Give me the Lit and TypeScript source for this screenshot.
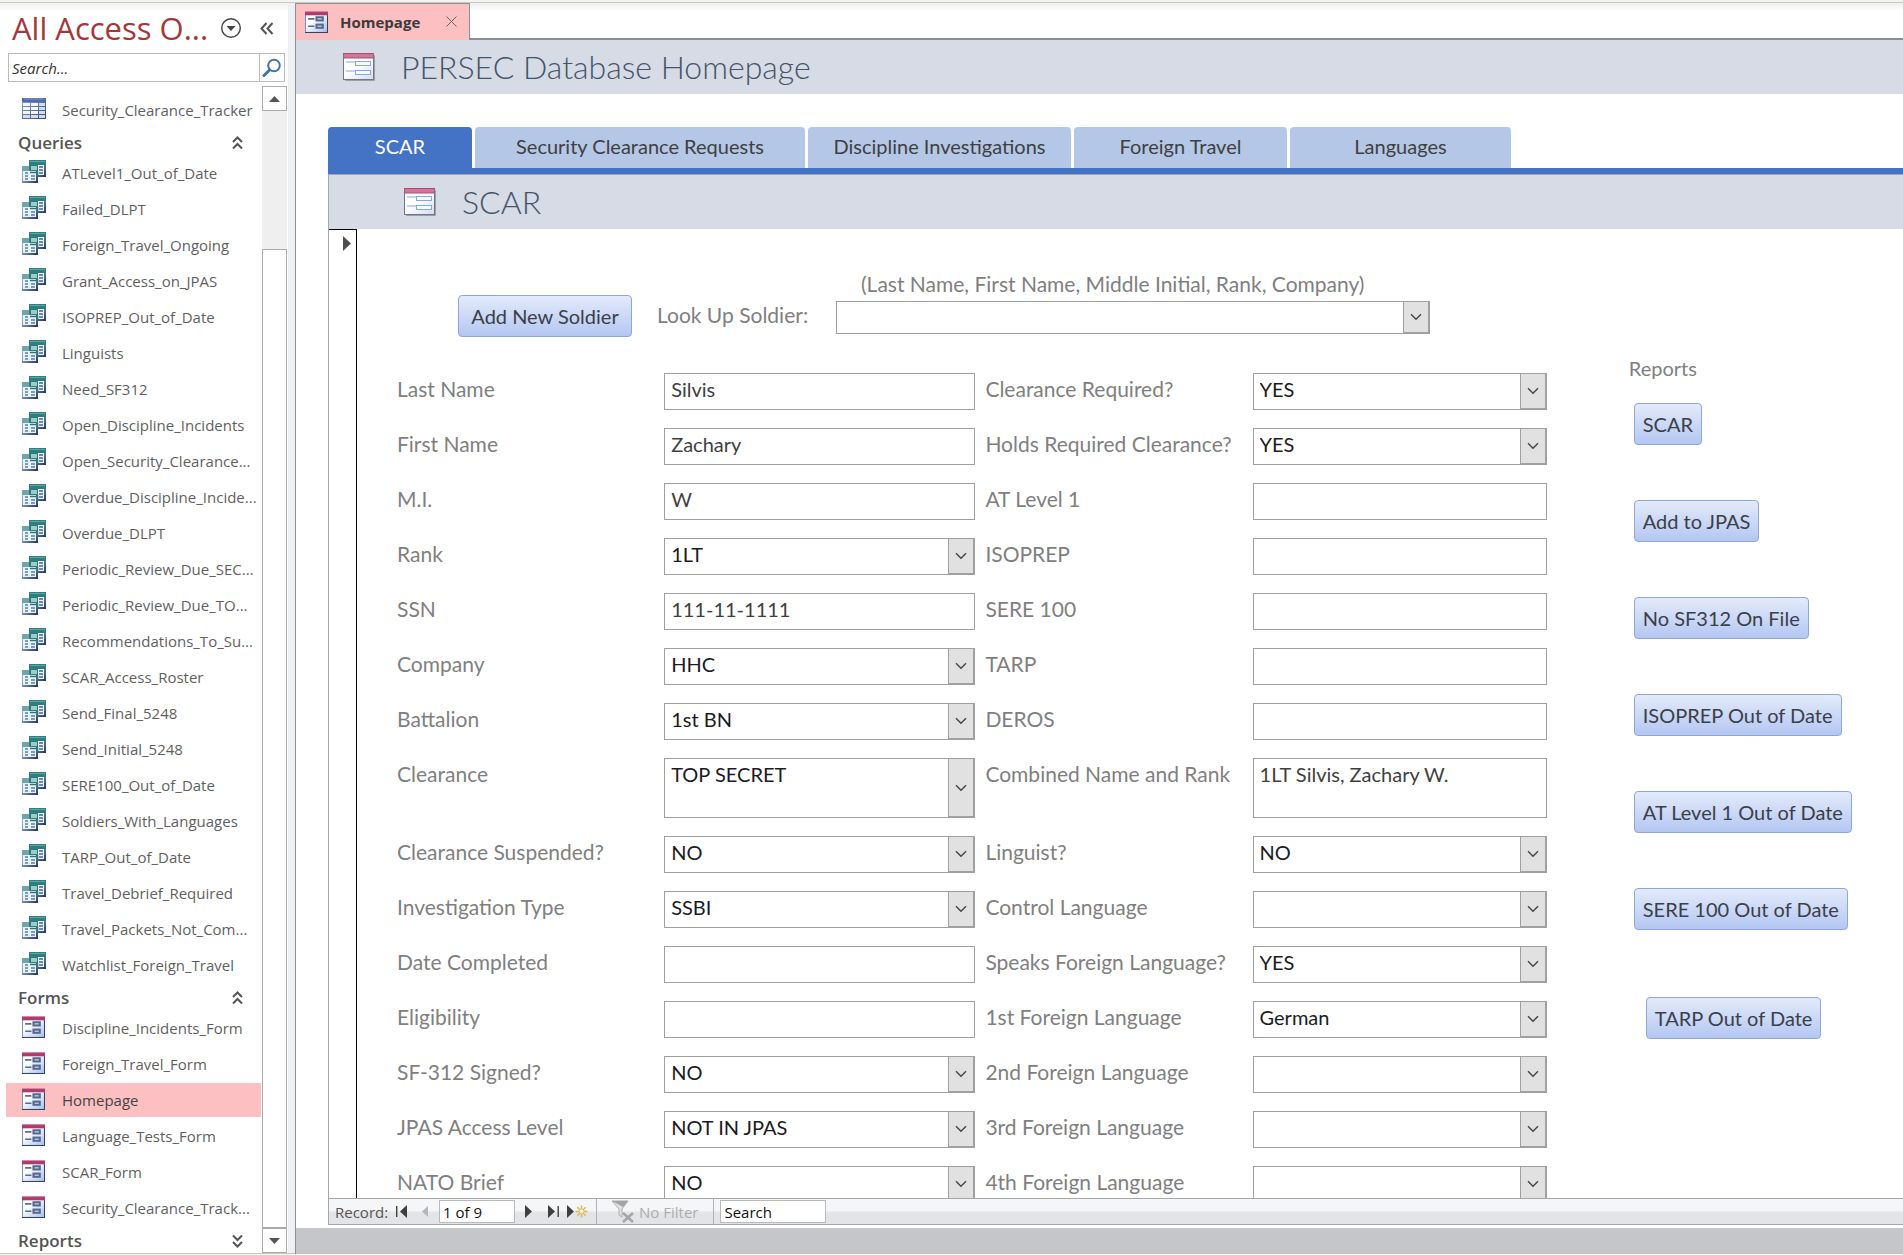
import { LitElement, html, css, svg, nothing } from "lit";
import { customElement, property } from "lit/decorators.js";
import { classMap } from "lit/directives/class-map.js";

interface Field {
  label: string;
  value?: string;
  combo?: boolean;
  tall?: boolean;
}

const QUERIES = [
  "ATLevel1_Out_of_Date",
  "Failed_DLPT",
  "Foreign_Travel_Ongoing",
  "Grant_Access_on_JPAS",
  "ISOPREP_Out_of_Date",
  "Linguists",
  "Need_SF312",
  "Open_Discipline_Incidents",
  "Open_Security_Clearance...",
  "Overdue_Discipline_Incide...",
  "Overdue_DLPT",
  "Periodic_Review_Due_SEC...",
  "Periodic_Review_Due_TO...",
  "Recommendations_To_Su...",
  "SCAR_Access_Roster",
  "Send_Final_5248",
  "Send_Initial_5248",
  "SERE100_Out_of_Date",
  "Soldiers_With_Languages",
  "TARP_Out_of_Date",
  "Travel_Debrief_Required",
  "Travel_Packets_Not_Com...",
  "Watchlist_Foreign_Travel",
];

const FORMS = [
  "Discipline_Incidents_Form",
  "Foreign_Travel_Form",
  "Homepage",
  "Language_Tests_Form",
  "SCAR_Form",
  "Security_Clearance_Track...",
];

const TABS = [
  { label: "SCAR", size: "scar" },
  { label: "Security Clearance Requests", size: "requests" },
  { label: "Discipline Investigations", size: "discipline" },
  { label: "Foreign Travel", size: "travel" },
  { label: "Languages", size: "languages" },
];

const ROWS: [Field, Field][] = [
  [{ label: "Last Name", value: "Silvis" }, { label: "Clearance Required?", value: "YES", combo: true }],
  [{ label: "First Name", value: "Zachary" }, { label: "Holds Required Clearance?", value: "YES", combo: true }],
  [{ label: "M.I.", value: "W" }, { label: "AT Level 1" }],
  [{ label: "Rank", value: "1LT", combo: true }, { label: "ISOPREP" }],
  [{ label: "SSN", value: "111-11-1111" }, { label: "SERE 100" }],
  [{ label: "Company", value: "HHC", combo: true }, { label: "TARP" }],
  [{ label: "Battalion", value: "1st BN", combo: true }, { label: "DEROS" }],
  [
    { label: "Clearance", value: "TOP SECRET", combo: true, tall: true },
    { label: "Combined Name and Rank", value: "1LT Silvis, Zachary W.", tall: true },
  ],
  [{ label: "Clearance Suspended?", value: "NO", combo: true }, { label: "Linguist?", value: "NO", combo: true }],
  [{ label: "Investigation Type", value: "SSBI", combo: true }, { label: "Control Language", combo: true }],
  [{ label: "Date Completed" }, { label: "Speaks Foreign Language?", value: "YES", combo: true }],
  [{ label: "Eligibility" }, { label: "1st Foreign Language", value: "German", combo: true }],
  [{ label: "SF-312 Signed?", value: "NO", combo: true }, { label: "2nd Foreign Language", combo: true }],
  [{ label: "JPAS Access Level", value: "NOT IN JPAS", combo: true }, { label: "3rd Foreign Language", combo: true }],
  [{ label: "NATO Brief", value: "NO", combo: true }, { label: "4th Foreign Language", combo: true }],
];

const REPORTS = [
  "SCAR",
  "Add to JPAS",
  "No SF312 On File",
  "ISOPREP Out of Date",
  "AT Level 1 Out of Date",
  "SERE 100 Out of Date",
];

const chevron = html`<svg class="chevron" width="12" height="8" viewBox="0 0 12 8" aria-hidden="true">
  <path d="M1 1.2 6 6.2 11 1.2" fill="none" stroke="#444" stroke-width="1.4" />
</svg>`;

@customElement("access-icon")
export class AccessIcon extends LitElement {
  @property() name = "";

  static styles = css`
    :host {
      display: inline-flex;
      flex: none;
    }
    svg {
      display: block;
    }
  `;

  private table() {
    return html`<svg width="24" height="21" viewBox="0 0 24 21">
      <defs>
        <linearGradient id="g" x1="0" y1="0" x2="1" y2="1">
          <stop offset="0" stop-color="#8ea5cf" /><stop offset="1" stop-color="#33466f" />
        </linearGradient>
      </defs>
      <rect width="24" height="21" fill="url(#g)" />
      <rect x="0" width="24" height="4" fill="#4f6ba8" />
      <path d="M2 1h20" stroke="#7f99cc" stroke-width="1" />
      ${[5, 9, 13, 17].map((y) => [1, 9, 17].map((x) => svg`<rect x=${x} y=${y} width=${x === 17 ? 6 : 7} height="3" fill=${x === 17 || y === 17 ? "#cfdcf2" : "#f4f8fe"} />`))}
    </svg>`;
  }

  private query() {
    return html`<svg width="24" height="23" viewBox="0 0 24 23">
      <defs>
        <linearGradient id="q" x1="0" y1="0" x2="1" y2="1">
          <stop offset=".3" stop-color="#8fb0c0" /><stop offset="1" stop-color="#22365a" />
        </linearGradient>
      </defs>
      <rect x="7" y="0" width="17" height="17" fill="url(#q)" />
      <rect x="7" y="0" width="17" height="5" fill="#2f7f80" />
      <path d="M8 1.500h15" stroke="#5fa3a3" />
      <rect x="8" y="5" width="14" height="10" fill="#eef4fb" />
      <path d="M17 7h4M17 10h4M17 13h4" stroke="#7187ab" stroke-width="2" />
      <rect x="0" y="6" width="16" height="17" fill="url(#q)" />
      <rect x="0" y="6" width="16" height="5" fill="#6fa6a8" />
      <rect x="7" y="4" width="9" height="8" fill="#2e7c7c" />
      <rect x="9" y="6" width="6" height="4" fill="#9ccbca" />
      <rect x="1" y="11" width="13" height="10" fill="#e9f1fa" />
      <path d="M3 13h3M3 16h3M3 19h3M9 16h4M9 19h4" stroke="#7f9dbb" stroke-width="2" />
      <path d="M8 12.500h7M15.500 11v5" stroke="#2e7480" stroke-width="1.500" />
    </svg>`;
  }

  private form() {
    return html`<svg width="23" height="22" viewBox="0 0 22 21">
      <defs>
        <linearGradient id="f" x1="0" y1="0" x2="1" y2="1">
          <stop offset=".3" stop-color="#ffffff" /><stop offset="1" stop-color="#a9c0ec" />
        </linearGradient>
      </defs>
      <rect width="22" height="21" fill="#7c8fb6" />
      <path d="M21.500 4v17M0 20.500h22" stroke="#2f4468" />
      <rect x="1" y="4" width="20" height="16" fill="url(#f)" />
      <rect width="22" height="4" fill="#b23a6b" />
      <path d="M0 .5h22" stroke="#cf8aa6" />
      <path d="M3 7.500h6M3 14.500h6" stroke="#5a6c94" stroke-width="1.500" />
      <rect x="11" y="6" width="6" height="3" fill="#dfe8f8" stroke="#556890" stroke-width="2" />
      <rect x="11" y="13" width="6" height="3" fill="#dfe8f8" stroke="#556890" stroke-width="2" />
    </svg>`;
  }

  private header() {
    return html`<svg width="33" height="29" viewBox="0 0 33 29">
      <defs>
        <linearGradient id="h" x1="0" y1="0" x2="1" y2="1">
          <stop offset=".4" stop-color="#ffffff" /><stop offset="1" stop-color="#d3def2" />
        </linearGradient>
      </defs>
      <rect x="2" y="2" width="30" height="26" rx="1" fill="#7d8492" opacity=".7" />
      <rect x="0" y="0" width="31" height="27" fill="#77718a" />
      <rect x="1" y="5" width="29" height="21" fill="url(#h)" />
      <rect x="1" y="1" width="29" height="4" fill="#cf7798" />
      <path d="M0 .5h31M1 5h29" stroke="#b04c74" />
      <path d="M3 9h9M3 18h9" stroke="#8aa6cf" />
      <rect x="12.500" y="8.500" width="15" height="4" fill="#f6faff" stroke="#86a9d8" />
      <rect x="12.500" y="17.500" width="15" height="4" fill="#f6faff" stroke="#86a9d8" />
    </svg>`;
  }

  render() {
    switch (this.name) {
      case "table":
        return this.table();
      case "query":
        return this.query();
      case "header":
        return this.header();
      default:
        return this.form();
    }
  }
}

@customElement("nav-pane")
export class NavPane extends LitElement {
  static styles = css`
    :host {
      display: grid;
      grid-template-rows: auto minmax(0, 1fr);
      min-height: 0;
      overflow: hidden;
      background: linear-gradient(#f1f1f0, #fff 8px);
      font-family: "Open Sans", "Noto Sans", sans-serif;
      color: #5a5a5a;
    }
    .head {
      display: flex;
      align-items: center;
      height: 50px;
      padding: 0 14px 0 12px;
    }
    h1 {
      flex: 1;
      margin: 0;
      font-size: 31px;
      font-weight: 400;
      line-height: 40px;
      color: #a4373a;
      white-space: nowrap;
    }
    button {
      display: flex;
      align-items: center;
      justify-content: center;
      padding: 0;
      border: 0;
      background: none;
    }
    .head button + button {
      margin-left: 18px;
    }
    .search {
      display: grid;
      grid-template-columns: 1fr 24px;
      height: 27px;
      margin: 0 3px 4px 8px;
      border: 1px solid #bbb;
      background: #fff;
    }
    .search input {
      min-width: 0;
      padding: 0 3px;
      border: 0;
      border-right: 1px solid #bbb;
      background: none;
      font: italic 15px "Open Sans", sans-serif;
      color: #333;
    }
    .search input::placeholder {
      color: #333;
      opacity: 1;
    }
    .body {
      display: grid;
      grid-template-columns: minmax(0, 1fr) 25px;
      gap: 1px;
      min-height: 0;
      padding: 0 1px 0 6px;
    }
    .list {
      overflow: hidden;
      padding-top: 7px;
    }
    h2 {
      display: flex;
      align-items: center;
      justify-content: space-between;
      height: 27px;
      margin: 0;
      padding: 0 18px 0 12px;
      font-size: 17px;
      font-weight: 600;
      line-height: 22px;
      color: #555;
    }
    ul {
      margin: 0;
      padding: 0;
      list-style: none;
    }
    li {
      height: 34px;
      margin-bottom: 2px;
    }
    a {
      display: grid;
      grid-template-columns: 40px 1fr;
      align-items: center;
      height: 34px;
      padding-left: 16px;
      font-size: 15px;
      color: #5f5f5f;
      text-decoration: none;
      white-space: nowrap;
    }
    a access-icon {
      padding-bottom: 3px;
    }
    .current {
      background: #fcc0c2;
      color: #444;
    }
    .bar {
      display: grid;
      grid-template-rows: 25px 138px 1fr 25px;
      background: #efefef;
    }
    .bar button,
    .thumb {
      border: 1px solid #ababab;
      background: #fff;
    }
  `;

  private item(name: string, icon: string) {
    const current = name === "Homepage";
    return html`<li>
      <a href="#" class=${classMap({ current })} aria-current=${current ? "page" : nothing}>
        <access-icon name=${icon}></access-icon>${name}
      </a>
    </li>`;
  }

  private fold(open: boolean) {
    return html`<svg width="11" height="14" viewBox="0 0 11 14" aria-hidden="true">
      <path
        d=${open ? "M1 6 5.500 1.500 10 6M1 12.500 5.500 8 10 12.500" : "M1 1.500 5.500 6 10 1.500M1 8 5.500 12.500 10 8"}
        fill="none"
        stroke="#555"
        stroke-width="2"
      />
    </svg>`;
  }

  render() {
    return html`
      <header>
        <div class="head">
          <h1>All Access O...</h1>
          <button aria-label="Navigation options">
            <svg width="22" height="22" viewBox="0 0 22 22">
              <circle cx="11" cy="11" r="9.300" fill="none" stroke="#444" stroke-width="1.400" />
              <path d="M6.500 9h9L11 14z" fill="#444" />
            </svg>
          </button>
          <button aria-label="Collapse pane">
            <svg width="14" height="13" viewBox="0 0 14 13">
              <path d="M6.500 1 1.500 6.500l5 5.500M12.500 1l-5 5.500 5 5.500" fill="none" stroke="#555" stroke-width="2" />
            </svg>
          </button>
        </div>
        <div class="search">
          <input type="search" placeholder="Search..." aria-label="Search objects" />
          <button aria-label="Search">
            <svg width="20" height="20" viewBox="0 0 20 20">
              <circle cx="12" cy="7.500" r="5.800" fill="#fff" stroke="#3f74ad" stroke-width="2" />
              <path d="M7.500 12 2 17.500" stroke="#3f74ad" stroke-width="3" stroke-linecap="round" />
            </svg>
          </button>
        </div>
      </header>
      <div class="body">
        <nav class="list">
          <ul>
            ${this.item("Security_Clearance_Tracker", "table")}
          </ul>
          <h2>Queries ${this.fold(true)}</h2>
          <ul>
            ${QUERIES.map((q) => this.item(q, "query"))}
          </ul>
          <h2>Forms ${this.fold(true)}</h2>
          <ul>
            ${FORMS.map((f) => this.item(f, "form"))}
          </ul>
          <h2>Reports ${this.fold(false)}</h2>
        </nav>
        <div class="bar">
          <button aria-label="Scroll up">
            <svg width="11" height="6" viewBox="0 0 11 6"><path d="M0 6h11L5.500 0z" fill="#555" /></svg>
          </button>
          <div></div>
          <div class="thumb"></div>
          <button aria-label="Scroll down">
            <svg width="11" height="6" viewBox="0 0 11 6"><path d="M0 0h11L5.500 6z" fill="#555" /></svg>
          </button>
        </div>
      </div>
    `;
  }
}

@customElement("record-bar")
export class RecordBar extends LitElement {
  static styles = css`
    :host {
      display: flex;
      align-items: center;
      height: 25px;
      padding-left: 6px;
      border: 1px solid #a5a6aa;
      border-right: 0;
      background: linear-gradient(#f5f6f8 0 45%, #e3e4e8 55%);
      font-family: "Open Sans", "Noto Sans", sans-serif;
      font-size: 15px;
      color: #555;
    }
    label {
      display: flex;
      width: 54px;
    }
    input {
      box-sizing: border-box;
      height: 23px;
      padding: 0 3px;
      border: 1px solid #b9babd;
      background: #fff;
      font: 15px "Open Sans", sans-serif;
      color: #111;
    }
    input::placeholder {
      color: #111;
      opacity: 1;
    }
    .position {
      width: 76px;
    }
    .find {
      width: 106px;
      margin-left: 6px;
    }
    button {
      display: flex;
      align-items: center;
      padding: 0;
      border: 0;
      background: none;
      font: inherit;
      color: #adadb0;
    }
    .step {
      justify-content: center;
      width: 25px;
      height: 23px;
    }
    .filter {
      gap: 4px;
      height: 25px;
      margin-left: 6px;
      padding: 0 15px 0 14px;
      border: solid #b0b1b4;
      border-width: 0 1px;
    }
  `;

  private step(label: string, path: string, color = "#3f3f42") {
    return html`<button class="step" aria-label=${label}>
      <svg width="12" height="13" viewBox="0 0 12 13"><path d=${path} fill=${color} /></svg>
    </button>`;
  }

  render() {
    return html`
      <label for="position">Record:</label>
      ${this.step("First record", "M0 1h1.400v11H0zM11 0v13L4 6.500z")}
      ${this.step("Previous record", "M7 1v11L1 6.500z", "#b5b6b9")}
      <input class="position" id="position" value="1 of 9" />
      ${this.step("Next record", "M3 0v13l7-6.500z")}
      ${this.step("Last record", "M1 0v13l7-6.500zM10.500 1h1.400v11h-1.400z")}
      <button class="step" aria-label="New record">
        <svg width="21" height="13" viewBox="0 0 21 13">
          <path d="M0 0v13l7-6.500z" fill="#3f3f42" />
          <path
            d="M14.500.5v3.500M14.500 9v3.500M8.500 6.500H12M17 6.500h3.500M10.300 2.300l2.500 2.500M16.200 8.200l2.500 2.500M18.700 2.300l-2.500 2.500M12.800 8.200l-2.500 2.500"
            stroke="#e5b550"
            stroke-width="1.500"
          />
          <circle cx="14.500" cy="6.500" r="2.500" fill="none" stroke="#e8bd63" />
        </svg>
      </button>
      <button class="filter" disabled>
        <svg width="24" height="23" viewBox="0 0 24 23">
          <path d="M1 1h16l-6 8v8l-3-2V9z" fill="#e3e3e5" stroke="#adadb0" />
          <path d="M1 1h16l-5 6z" fill="#a5a5a8" />
          <path d="m12 13 10 9M22 13l-10 9" stroke="#a5a5a8" stroke-width="2.500" />
        </svg>
        No Filter
      </button>
      <input class="find" placeholder="Search" aria-label="Search records" />
    `;
  }
}

@customElement("soldier-form")
export class SoldierForm extends LitElement {
  static styles = css`
    :host {
      display: block;
      overflow: hidden;
      min-height: 0;
      font-family: Lato, "Open Sans", sans-serif;
      font-size: 21px;
      color: #7f7f7f;
    }
    .lookup {
      display: grid;
      grid-template-columns: 174px 154px minmax(0, 594px);
      grid-template-rows: 28px 42px;
      column-gap: 25px;
      padding: 41px 16px 0 102px;
    }
    .hint {
      grid-column: 3;
      margin: 0;
      padding-left: 25px;
      line-height: 28px;
      white-space: nowrap;
    }
    .lookup > label {
      line-height: 34px;
    }
    .push {
      height: 42px;
      padding: 0 8px 1px;
      border: 1px solid #8da7d9;
      border-radius: 4px;
      background: linear-gradient(#e3eafb, #b4c7f2);
      font: 20px Lato, "Open Sans", sans-serif;
      color: #3b3f48;
      white-space: nowrap;
    }
    .lookup > .push {
      margin-top: -3px;
    }
    .control {
      position: relative;
      display: grid;
      height: 37px;
    }
    .lookup .control {
      height: 33px;
      margin-top: 3px;
    }
    .tall .control {
      height: 60px;
    }
    input,
    select {
      box-sizing: border-box;
      width: 100%;
      height: 100%;
      margin: 0;
      padding: 0 6px 5px;
      border: 1px solid #a0a0a0;
      border-radius: 0;
      background: #fff;
      font: 20px Lato, "Open Sans", sans-serif;
      color: #3f3f3f;
      appearance: none;
    }
    select {
      color: #1b1b24;
      opacity: 1;
    }
    .tall input,
    .tall select {
      padding-bottom: 28px;
    }
    .arrow {
      position: absolute;
      inset: 0 0 0 auto;
      display: flex;
      align-items: center;
      justify-content: center;
      box-sizing: border-box;
      width: 27px;
      border: solid #a0a0a0;
      border-width: 1px 2px 2px 1px;
      background: #e1e1e1;
      pointer-events: none;
    }
    .sheet {
      display: grid;
      grid-template-columns: minmax(0, 1149fr) minmax(0, 356fr);
      padding-left: 41px;
    }
    .fields {
      display: grid;
      gap: 18px;
      margin-top: 33px;
    }
    .row {
      display: grid;
      grid-template-columns: 267fr 311fr 277fr 294fr;
    }
    .row label {
      line-height: 32px;
      white-space: nowrap;
    }
    .row label:nth-of-type(2) {
      padding-left: 10px;
    }
    .reports {
      display: grid;
      justify-items: start;
      align-content: start;
      gap: 55px;
      padding-left: 87px;
    }
    h3 {
      margin: 16px 0 -32px -5px;
      font-size: 20px;
      font-weight: 400;
      line-height: 24px;
    }
    .last {
      margin: 12px 0 0 12px;
    }
  `;

  private field(f: Field, id: string) {
    return html`
      <label for=${id}>${f.label}</label>
      <div class="control">
        ${f.combo
          ? html`<select id=${id}>
                <option>${f.value ?? ""}</option>
              </select>
              <span class="arrow">${chevron}</span>`
          : html`<input id=${id} .value=${f.value ?? ""} />`}
      </div>
    `;
  }

  render() {
    return html`
      <div class="lookup">
        <p class="hint">(Last Name, First Name, Middle Initial, Rank, Company)</p>
        <button class="push">Add New Soldier</button>
        <label for="lookup">Look Up Soldier:</label>
        <div class="control">
          <select id="lookup">
            <option></option>
          </select>
          <span class="arrow">${chevron}</span>
        </div>
      </div>
      <div class="sheet">
        <div class="fields">
          ${ROWS.map(
            ([a, b], i) => html`<div class=${classMap({ row: true, tall: !!a.tall })}>
              ${this.field(a, `left-${i}`)} ${this.field(b, `right-${i}`)}
            </div>`
          )}
        </div>
        <section class="reports">
          <h3>Reports</h3>
          ${REPORTS.map((r) => html`<button class="push">${r}</button>`)}
          <button class="push last">TARP Out of Date</button>
        </section>
      </div>
    `;
  }
}

@customElement("app-root")
export class AppRoot extends LitElement {
  static styles = css`
    :host {
      display: grid;
      grid-template: 3px minmax(0, 1fr) 1px / 288px 7px minmax(0, 1fr);
      box-sizing: border-box;
      height: 100vh;
      background: #f3f3f1;
      font-family: Lato, "Open Sans", sans-serif;
    }
    .strip {
      grid-column: 1 / -1;
      border-bottom: 1px solid #c9c9c6;
    }
    nav-pane {
      grid-column: 1;
      border-bottom: 1px solid #c9c9c6;
    }
    .splitter {
      border-bottom: 1px solid #c9c9c6;
      background: #eef0f3;
    }
    main {
      display: grid;
      grid-template-rows: auto auto minmax(0, 1fr) 26px;
      min-height: 0;
      border-left: 1px solid #8b8f94;
      background: #fff;
    }
    .documents {
      display: flex;
      height: 37px;
      background: linear-gradient(#efefee, #fff 8px);
    }
    .document {
      display: flex;
      align-items: center;
      box-sizing: border-box;
      width: 174px;
      padding: 0 12px 1px 9px;
      border: solid #8b8f94;
      border-width: 1px 1px 0 0;
      background: #fcc0c2;
      font: 700 15px "Open Sans", sans-serif;
      color: #3b3b3b;
    }
    .document span {
      flex: 1;
      padding-left: 12px;
    }
    .document button {
      display: flex;
      padding: 0;
      border: 0;
      background: none;
    }
    .rest {
      flex: 1;
      border-bottom: 2px solid #8b8f94;
    }
    .title {
      display: flex;
      align-items: center;
      gap: 25px;
      height: 54px;
      padding-left: 47px;
      background: #d6dbe5;
      color: #44546a;
    }
    h1,
    h2 {
      margin: 0;
      font-size: 32px;
      font-weight: 300;
      line-height: 40px;
    }
    .page {
      display: grid;
      grid-template-rows: auto auto minmax(0, 1fr) auto;
      min-height: 0;
      padding: 33px 0 3px 32px;
    }
    .tabs {
      display: flex;
      gap: 3px;
      border-bottom: 6px solid #4472c4;
    }
    .tab {
      height: 41px;
      padding: 0 0 3px;
      border: 0;
      border-radius: 4px 4px 0 0;
      background: #b4c7e7;
      font: 20px Lato, "Open Sans", sans-serif;
      color: #404040;
      white-space: nowrap;
    }
    .active {
      background: #4472c4;
      color: #fff;
    }
    .scar { width: 144px; }
    .requests { width: 330px; }
    .discipline { width: 263px; }
    .travel { width: 213px; }
    .languages { width: 221px; }
    .sub {
      padding-left: 75px;
      border: solid #a5a6aa;
      border-width: 1px 0 0 1px;
    }
    .sheet {
      display: grid;
      grid-template-columns: 28px minmax(0, 1fr);
      min-height: 0;
      border-left: 1px solid #a5a6aa;
    }
    .selector {
      padding: 5px 0 0 14px;
      border: solid #000;
      border-width: 1px 1px 0 0;
    }
    soldier-form {
      margin-left: -1px;
    }
    .backdrop {
      background: #c5c6ca;
    }
  `;

  render() {
    return html`
      <div class="strip"></div>
      <nav-pane></nav-pane>
      <div class="splitter"></div>
      <main>
        <div class="documents">
          <div class="document">
            <access-icon name="form"></access-icon>
            <span>Homepage</span>
            <button aria-label="Close Homepage">
              <svg width="11" height="11" viewBox="0 0 11 11">
                <path d="M.5.5l10 10M10.500.5l-10 10" stroke="#666" />
              </svg>
            </button>
          </div>
          <div class="rest"></div>
        </div>
        <header class="title">
          <access-icon name="header"></access-icon>
          <h1>PERSEC Database Homepage</h1>
        </header>
        <div class="page">
          <div class="tabs" role="tablist">
            ${TABS.map(
              (t, i) => html`<button
                role="tab"
                aria-selected=${i === 0 ? "true" : "false"}
                class=${classMap({ tab: true, active: i === 0, [t.size]: true })}
              >
                ${t.label}
              </button>`
            )}
          </div>
          <header class="title sub">
            <access-icon name="header"></access-icon>
            <h2>SCAR</h2>
          </header>
          <div class="sheet">
            <div class="selector">
              <svg width="8" height="15" viewBox="0 0 8 15" aria-hidden="true">
                <path d="M0 0v15l8-7.500z" fill="#4f4f4f" />
              </svg>
            </div>
            <soldier-form></soldier-form>
          </div>
          <record-bar></record-bar>
        </div>
        <div class="backdrop"></div>
      </main>
    `;
  }
}
